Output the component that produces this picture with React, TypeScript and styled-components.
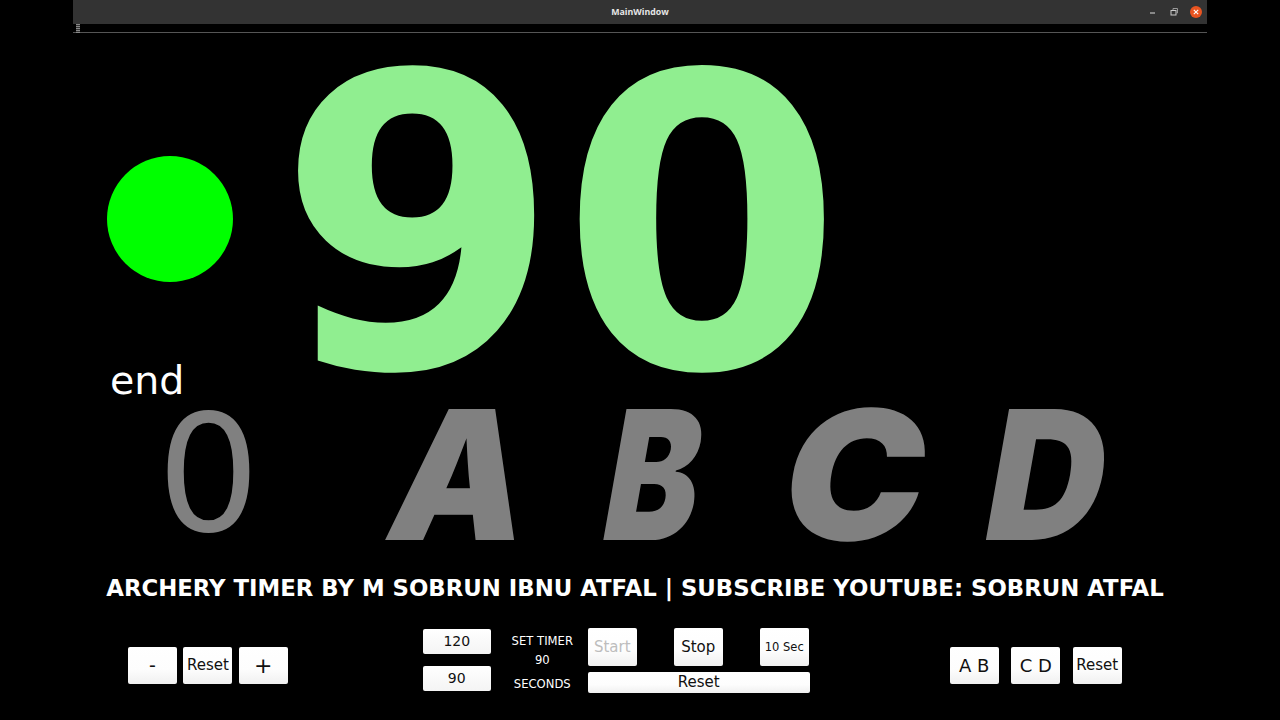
import React from "react";
import { createGlobalStyle, styled } from "styled-components";

const GlobalStyle = createGlobalStyle`
    html, body {
        margin: 0;
        height: 100%;
        background: #000;
        overflow: hidden;
        font-family: "DejaVu Sans", sans-serif;
    }
`;

const Window = styled.div`
    width: 1134px;
    height: 720px;
    margin-left: 73px;
    display: flex;
    flex-direction: column;
    background: #000;
`;

const TitleBar = styled.div`
    height: 24px;
    flex: none;
    box-sizing: border-box;
    padding-bottom: 1px;
    background: #333333;
    display: flex;
    align-items: center;
    justify-content: center;
    position: relative;
    color: #e6e6e6;
    font-family: "Open Sans", sans-serif;
    font-size: 8.800px;
    font-weight: 700;
`;

const WindowButtons = styled.div`
    position: absolute;
    right: 4px;
    top: 4px;
    display: flex;
    align-items: center;
    gap: 9px;
`;

const ToolBar = styled.div`
    height: 8px;
    flex: none;
    border-bottom: 1px solid #555;
    padding-left: 3px;
    display: flex;
`;

const Grip = styled.div`
    width: 4px;
    height: 9px;
    background: repeating-linear-gradient(to bottom, #888 0 1px, #333 1px 2px);
`;

const TimerRow = styled.div`
    height: 367px;
    flex: none;
    display: flex;
`;

const StatusColumn = styled.div`
    width: 204px;
    flex: none;
    padding: 123px 0 0 34px;
    box-sizing: border-box;
`;

const Light = styled.div`
    width: 126px;
    height: 126px;
    border-radius: 50%;
    background: #00ff00;
`;

const PhaseLabel = styled.div`
    margin: 74px 0 0 3px;
    color: #fff;
    font-size: 39.500px;
    line-height: 48px;
`;

const Countdown = styled.div`
    color: #90ee90;
    font-size: 407px;
    font-weight: 700;
    line-height: 386px;
    height: 367px;
`;

const ScoreRow = styled.div`
    height: 150px;
    flex: none;
    display: flex;
    align-items: center;
`;

const EndCount = styled.div`
    width: 288px;
    flex: none;
    padding-left: 84px;
    box-sizing: border-box;
    color: #808080;
    font-size: 162px;
    line-height: 158px;
`;

const Detail = styled.div<{ $width: number; $stretch: number }>`
    width: ${(p) => p.$width}px;
    flex: none;
    text-align: center;
    color: #808080;
    font-family: "Inter", sans-serif;
    font-size: 180px;
    font-weight: 900;
    line-height: 150px;
    transform: skewX(-10deg) scaleX(${(p) => p.$stretch});
`;

const Credit = styled.div`
    margin-top: 23px;
    padding-right: 10px;
    height: 30px;
    flex: none;
    text-align: center;
    color: #fff;
    font-size: 22.800px;
    font-weight: 700;
    line-height: 30px;
    white-space: nowrap;
`;

const Controls = styled.div`
    margin-top: 25px;
    height: 64px;
    flex: none;
    display: flex;
    align-items: center;
    padding-left: 55px;
`;

const ButtonGroup = styled.div<{ $gap: number; $left: number }>`
    display: flex;
    gap: ${(p) => p.$gap}px;
    margin-left: ${(p) => p.$left}px;
    margin-top: 10px;
`;

const Button = styled.button<{ $w?: number; $h?: number; $size?: number; $muted?: boolean }>`
    width: ${(p) => p.$w ?? 49}px;
    height: ${(p) => p.$h ?? 37}px;
    flex: none;
    padding: 0;
    border: 0;
    border-radius: 2px;
    background: linear-gradient(to bottom, #ffffff 0%, #fdfdfd 60%, #f0f0f0 100%);
    color: ${(p) => (p.$muted ? "#bdbdbd" : "#111")};
    font-family: "DejaVu Sans", sans-serif;
    font-size: ${(p) => p.$size ?? 15}px;
    white-space: nowrap;
`;

const InputStack = styled.div`
    width: 68px;
    margin-left: 135px;
    display: flex;
    flex-direction: column;
    gap: 12px;
`;

const SetInput = styled.div`
    height: 25px;
    background: linear-gradient(to bottom, #ffffff, #f4f4f4);
    border-radius: 2px;
    color: #111;
    font-size: 14px;
    line-height: 25px;
    text-align: center;
`;

const SetLabels = styled.div`
    width: 97px;
    height: 62px;
    flex: none;
    box-sizing: border-box;
    padding-left: 6px;
    display: flex;
    flex-direction: column;
    align-items: center;
    color: #fff;
    font-size: 11.600px;
    line-height: 14px;
`;

const LabelLine = styled.div<{ $top: number }>`
    margin-top: ${(p) => p.$top}px;
`;

const TimerButtons = styled.div`
    width: 222px;
    flex: none;
    display: flex;
    flex-direction: column;
    gap: 6px;
`;

const TimerTopRow = styled.div`
    width: 221px;
    display: flex;
    justify-content: space-between;
`;

function WindowControls() {
    return (
        <WindowButtons>
            <svg width="12" height="12" viewBox="0 0 12 12">
                <path d="M3 8h5" stroke="#ddd" strokeWidth="1" />
            </svg>
            <svg width="12" height="12" viewBox="0 0 12 12" fill="none">
                <rect x="3" y="5.500" width="5" height="4.500" stroke="#ccc" />
                <path d="M5 5V3.500h4.500V8H8.500" stroke="#999" />
            </svg>
            <svg width="14" height="14" viewBox="0 0 14 14">
                <circle cx="7" cy="8" r="6" fill="#e95420" />
                <path d="M4.800 5.800l4.400 4.400M9.200 5.800l-4.400 4.400" stroke="#fff" strokeWidth="1.100" />
            </svg>
        </WindowButtons>
    );
}

export default function App() {
    return (
        <>
            <GlobalStyle />
            <Window>
                <TitleBar>
                    MainWindow
                    <WindowControls />
                </TitleBar>
                <ToolBar>
                    <Grip />
                </ToolBar>

                <TimerRow>
                    <StatusColumn>
                        <Light />
                        <PhaseLabel>end</PhaseLabel>
                    </StatusColumn>
                    <Countdown>90</Countdown>
                </TimerRow>

                <ScoreRow>
                    <EndCount>0</EndCount>
                    <Detail $width={200} $stretch={0.955}>A</Detail>
                    <Detail $width={188} $stretch={0.78}>B</Detail>
                    <Detail $width={216} $stretch={1.05}>C</Detail>
                    <Detail $width={168} $stretch={0.91}>D</Detail>
                </ScoreRow>

                <Credit>ARCHERY TIMER BY M SOBRUN IBNU ATFAL | SUBSCRIBE YOUTUBE: SOBRUN ATFAL</Credit>

                <Controls>
                    <ButtonGroup $gap={6.400} $left={0}>
                        <Button $size={19}>-</Button>
                        <Button>Reset</Button>
                        <Button $size={22}>+</Button>
                    </ButtonGroup>

                    <InputStack>
                        <SetInput>120</SetInput>
                        <SetInput>90</SetInput>
                    </InputStack>

                    <SetLabels>
                        <LabelLine $top={5}>SET TIMER</LabelLine>
                        <LabelLine $top={5}>90</LabelLine>
                        <LabelLine $top={10}>SECONDS</LabelLine>
                    </SetLabels>

                    <TimerButtons>
                        <TimerTopRow>
                            <Button $size={15} $muted $h={38}>Start</Button>
                            <Button $size={15} $h={38}>Stop</Button>
                            <Button $size={11.500} $h={38}>10 Sec</Button>
                        </TimerTopRow>
                        <Button $w={222} $h={21}>Reset</Button>
                    </TimerButtons>

                    <ButtonGroup $gap={12.500} $left={140}>
                        <Button $size={18}>A B</Button>
                        <Button $size={18}>C D</Button>
                        <Button>Reset</Button>
                    </ButtonGroup>
                </Controls>
            </Window>
        </>
    );
}
